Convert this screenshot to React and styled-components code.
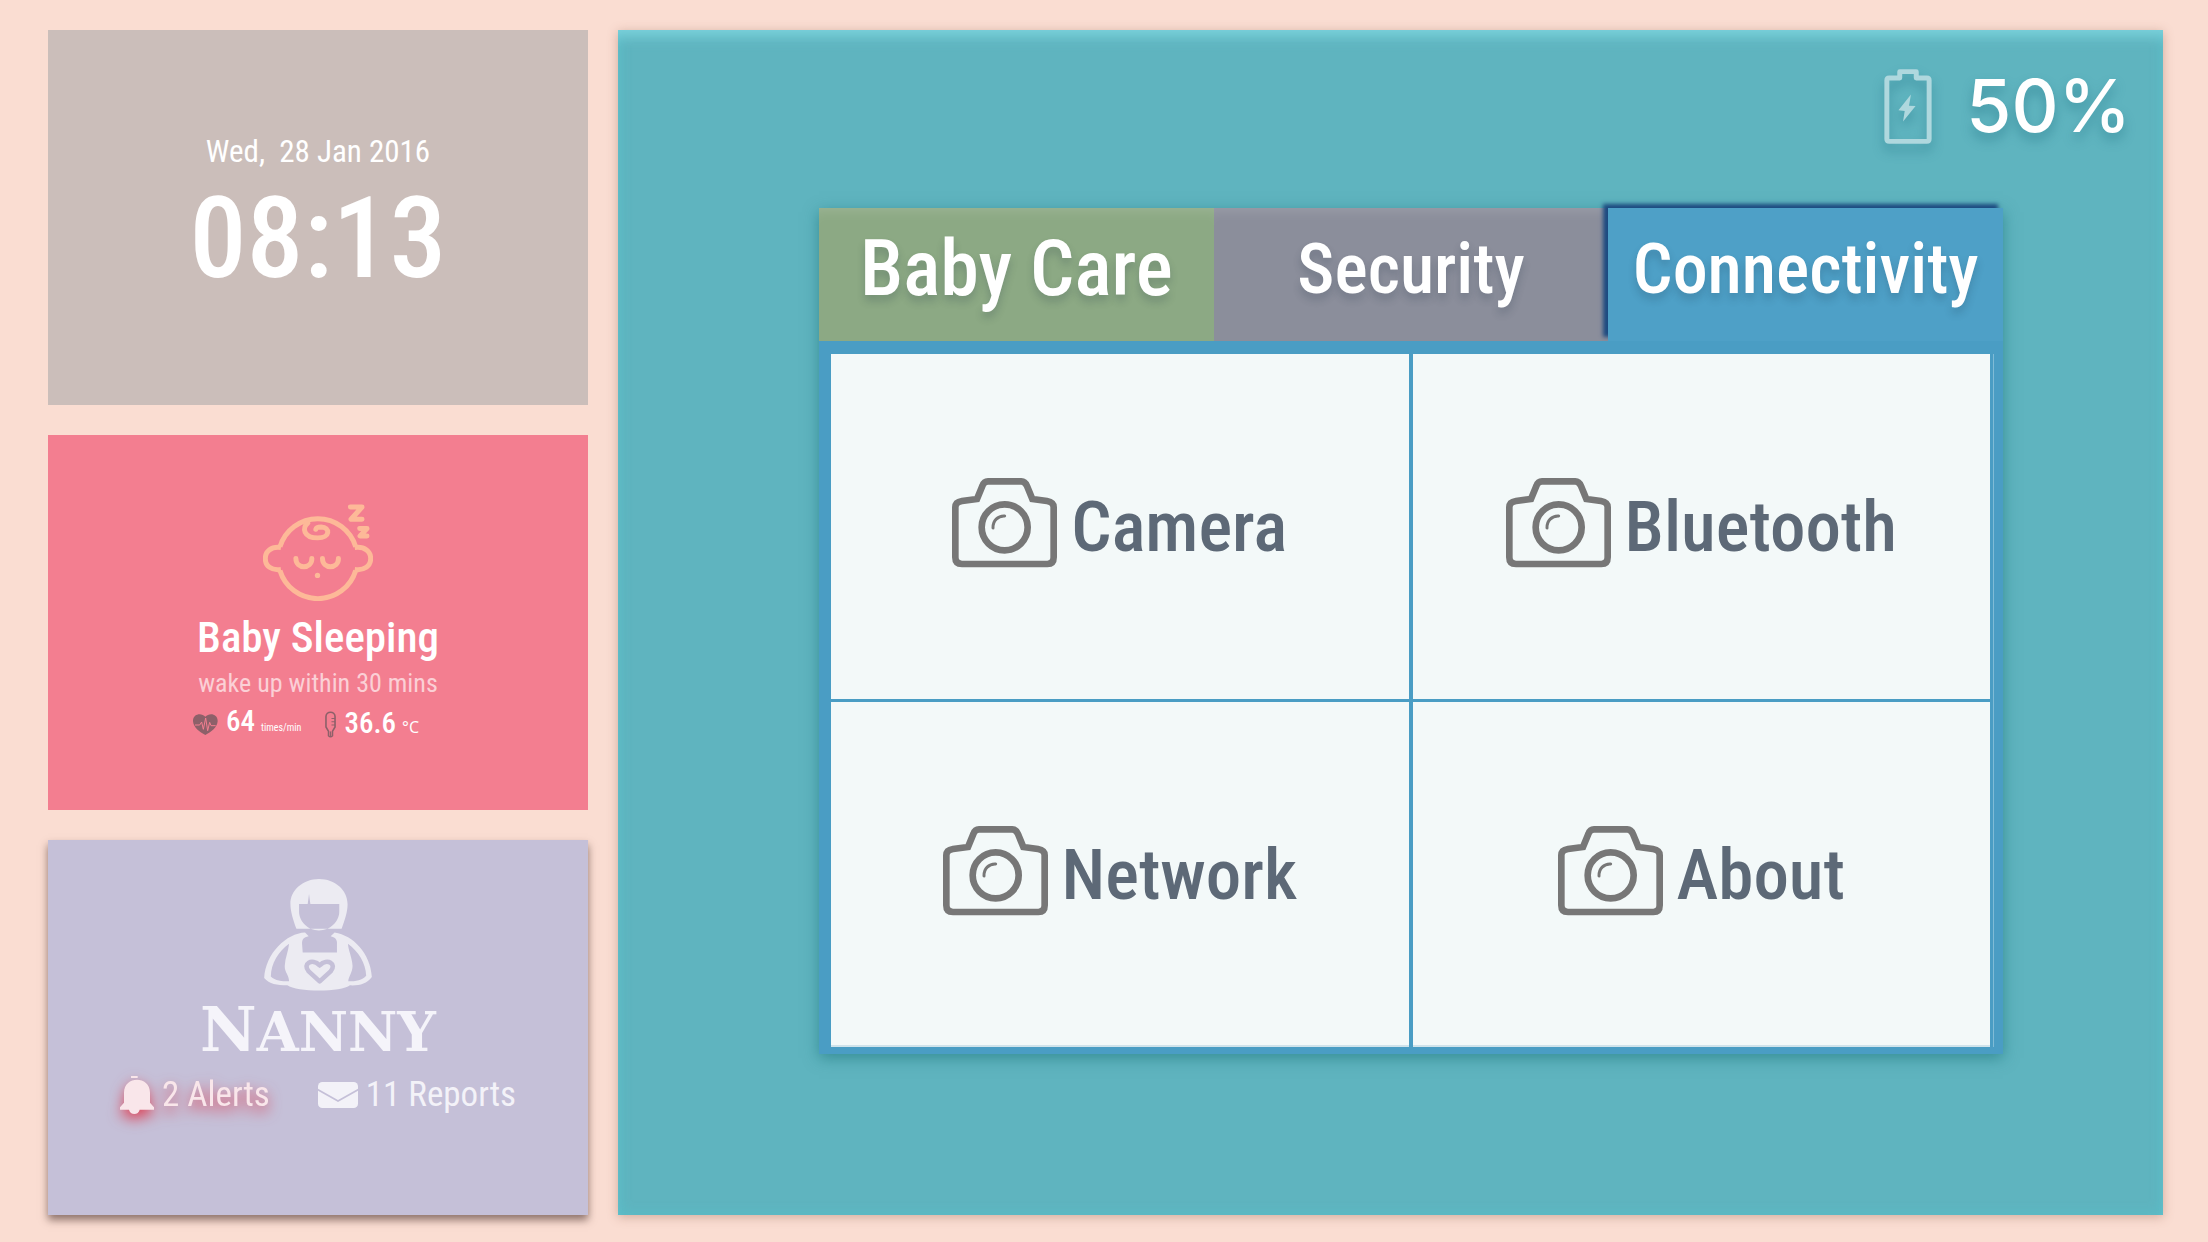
import React, { useState } from "react";
import styled, { createGlobalStyle } from "styled-components";

const CONDENSED = '"Roboto Condensed", "Liberation Sans", sans-serif';

const GlobalStyle = createGlobalStyle`
  *, *::before, *::after { box-sizing: border-box; }
  body {
    margin: 0;
    background: #faddd2;
    font-family: ${CONDENSED};
    font-weight: 500;
    color: #fff;
  }
  button {
    border: 0;
    margin: 0;
    padding: 0;
    font: inherit;
    color: inherit;
    cursor: pointer;
  }
  svg { display: block; flex: none; }
  h2, p { margin: 0; font-weight: inherit; }
`;

const Page = styled.div`
  display: grid;
  grid-template-columns: 540px minmax(0, 1fr);
  gap: 30px;
  min-height: 100vh;
  padding: 30px 45px 27px 48px;
`;

const Sidebar = styled.aside`
  display: grid;
  grid-auto-rows: minmax(0, 1fr);
  gap: 30px;
`;

const Card = styled.section`
  display: flex;
  flex-direction: column;
  align-items: center;
  padding-top: ${(p) => p.$top}px;
  background: ${(p) => p.$color};
  box-shadow: ${(p) => (p.$raised ? "0 5px 8px rgba(70, 45, 40, 0.6)" : "none")};
`;

const DateText = styled.p`
  font-size: 31px;
  font-weight: 400;
  line-height: 40px;
  white-space: pre;
`;

const TimeText = styled.time`
  font-size: 114px;
  line-height: 132px;
`;

const BabyTitle = styled.h2`
  margin-top: 8px;
  font-size: 43px;
  line-height: 56px;
`;

const BabyNote = styled.p`
  font-size: 26px;
  line-height: 36px;
  font-weight: 400;
  color: #fbd0d6;
`;

const Vitals = styled.div`
  display: flex;
  align-items: center;
  gap: 24px;
  padding-right: 24px;
`;

const Vital = styled.div`
  display: flex;
  align-items: center;
  gap: 8px;
`;

const Reading = styled.span`
  font-size: 29px;
  line-height: 40px;
`;

const Unit = styled.span`
  margin-left: 6px;
  font-family: ${(p) => (p.$plain ? '"Open Sans", sans-serif' : "inherit")};
  font-size: ${(p) => (p.$plain ? 16 : 10)}px;
  font-weight: 400;
`;

const NannyTitle = styled.h2`
  font-family: "DejaVu Serif", serif;
  font-weight: 700;
  font-size: 54px;
  line-height: 78px;
  color: #f5f4fa;
`;

const Initial = styled.span`
  font-size: 62px;
`;

const StatusRow = styled.nav`
  display: flex;
  gap: 48px;
`;

const StatusLink = styled.a`
  display: flex;
  align-items: center;
  gap: 8px;
  font-size: 35px;
  font-weight: 400;
  line-height: 48px;
  text-decoration: none;
  color: ${(p) => (p.$alert ? "#f9e6ea" : "#f3f2f8")};
  filter: ${(p) => (p.$alert ? "drop-shadow(0 6px 7px rgba(225, 40, 60, 0.8))" : "none")};
`;

const Main = styled.main`
  display: flex;
  flex-direction: column;
  padding: 38px 0 161px;
  background: #5fb4bf;
  box-shadow:
    inset 0 14px 14px -8px #7dd2dc,
    inset 0 0 14px rgba(80, 205, 215, 0.45),
    0 2px 10px rgba(130, 80, 60, 0.35);
`;

const Battery = styled.div`
  display: flex;
  justify-content: flex-end;
  align-items: center;
  gap: 34px;
  height: 76px;
  padding-right: 32px;
  filter: drop-shadow(0 7px 6px rgba(20, 100, 120, 0.4));
`;

const BatteryText = styled.span`
  font-family: Inter, sans-serif;
  font-weight: 500;
  font-size: 73px;
  line-height: 76px;
`;

const Settings = styled.div`
  flex: 1;
  display: flex;
  flex-direction: column;
  margin: 64px 160px 0 201px;
  box-shadow: 0 4px 14px rgba(20, 110, 115, 0.55);
`;

const Tabs = styled.div`
  display: flex;
`;

const Tab = styled.button`
  position: relative;
  flex: 1 1 0;
  height: 133px;
  padding-bottom: 12px;
  background: ${(p) => p.$color};
  font-size: ${(p) => p.$size}px;
  text-shadow: 0 6px 8px rgba(20, 40, 60, 0.2);
  box-shadow: ${(p) =>
    p["aria-selected"]
      ? "-5px -4px 4px #1d4a80"
      : "inset 0 12px 16px -12px rgba(255, 255, 255, 0.2)"};
  z-index: ${(p) => (p["aria-selected"] ? 1 : 0)};
`;

const Panel = styled.div`
  position: relative;
  z-index: 2;
  flex: 1;
  display: flex;
  padding: 13px 9px 7px 12px;
  background: #4a9dc4;
`;

const Tiles = styled.div`
  flex: 1;
  display: grid;
  grid-template-columns: 1fr 1fr;
  grid-template-rows: 1fr 1fr;
  column-gap: 4px;
  row-gap: 3px;
  padding-right: 3px;
  border-right: 1px solid #7fbbd6;
`;

const Tile = styled.button`
  display: flex;
  align-items: center;
  justify-content: center;
  gap: 14px;
  padding-bottom: 8px;
  background: #f3f9f9;
  color: #5d6977;
  font-size: 71px;
  line-height: 80px;

  &:nth-child(n + 3) {
    box-shadow: inset 0 -2px #cfe3eb;
  }
`;

const TileLabel = styled.span`
  padding-top: 8px;
`;

const CameraIcon = () => (
  <svg width="105" height="90" viewBox="0 0 315 270" fill="none" stroke="#777" strokeWidth="20" aria-hidden="true">
    <path d="M75 63 L91 24 Q96 10 108 10 H208 Q219 10 225 24 L241 63 L285 69 Q305 72 305 88 V238 Q305 258 286 258 H30 Q10 258 10 238 V88 Q10 72 30 69 Z" />
    <circle cx="158" cy="148" r="69" />
    <path d="M123 150 C122 128 138 113 158 114" strokeWidth="9" strokeLinecap="round" />
  </svg>
);

const BabyIcon = () => (
  <svg width="110" height="97" viewBox="33 42 331 290" fill="none" stroke="#fdb998" strokeWidth="15" aria-hidden="true">
    <path d="M84 170 A119 119 0 0 1 312 170 M84 241 A119 119 0 0 0 312 241" />
    <path d="M87 172 C56 168 40 185 40 205 C40 228 58 242 87 238 M309 172 C340 168 357 185 357 205 C357 228 338 242 309 238" />
    <path d="M168 98 C150 112 154 143 198 143 C236 143 236 111 208 110 C198 110 193 113 192 117" strokeLinecap="round" />
    <path d="M132 205 C132 238 180 238 180 205 M212 205 C212 238 260 238 260 205" strokeLinecap="round" />
    <path d="M296 50 H331 L298 87 H331 M324 115 H346 L325 137 H346" strokeLinecap="round" strokeLinejoin="round" />
    <circle cx="197" cy="256" r="8" fill="#fdb998" stroke="none" />
  </svg>
);

const NannyIcon = () => (
  <svg width="108" height="112" viewBox="42 27 324 337" fill="#ecebf2" fillRule="evenodd" aria-hidden="true">
    <path d="M139 177 H275 C285 150 293 125 293 103 C293 60 255 27 207 27 C160 27 120 60 121 103 C121 125 130 152 139 177 Z M147 102 V125 C147 156 175 182 207 182 C240 182 268 156 268 125 V102 H181 L177 72 L173 102 Z" />
    <path d="M165 188 L176 199 C160 203 156 208 156 222 L158 248 H261 V222 C262 208 256 203 242 199 L254 188 C310 197 362 250 366 322 C350 343 330 348 300 347 C275 368 140 368 112 347 C80 347 58 343 42 325 C46 250 110 190 165 188 Z M117 222 C85 245 63 280 62 320 C75 333 95 335 117 335 C117 315 103 308 104 288 C105 265 115 245 117 222 Z M294 222 C325 245 348 280 349 318 C338 332 318 335 295 335 C297 318 308 308 308 288 C306 262 296 245 294 222 Z" />
    <path d="M209 335 L176 305 C156 283 186 264 209 287 C232 264 262 283 242 305 Z" fill="none" stroke="#c5c0d8" strokeWidth="14" strokeLinejoin="round" />
  </svg>
);

const HeartIcon = () => (
  <svg width="25" height="21" viewBox="0 0 75 63" aria-hidden="true">
    <path d="M37 8 C48 -5 75 -2 74 22 C72 42 54 54 37 63 C20 54 2 42 0 22 C-1 -2 26 -5 37 8 Z" fill="#8d6069" />
    <path d="M6 33 H20 L26 24 L31 46 L38 12 L44 50 L50 25 L54 35 H68" fill="none" stroke="#f37e90" strokeWidth="3" />
  </svg>
);

const ThermometerIcon = () => (
  <svg width="11" height="27" viewBox="0 0 34 81" fill="none" stroke="#8d6069" strokeWidth="5" aria-hidden="true">
    <path d="M3 16 C3 -2 31 -2 31 16 V48 L23 62 V75 Q17 82 11 75 V62 L3 48 Z" />
    <path d="M20 22 H31 M20 32 H31 M20 42 H31 M17 62 V76" strokeWidth="3" />
  </svg>
);

const BellIcon = () => (
  <svg width="34" height="38" viewBox="0 0 102 114" fill="currentColor" aria-hidden="true">
    <path d="M33 0 H53 V6 H33 Z M12 80 V50 C12 -2 90 -2 90 50 V80 L102 94 V101 H59 C56 118 30 118 27 101 H0 V94 Z" />
  </svg>
);

const EnvelopeIcon = () => (
  <svg width="40" height="26" viewBox="0 0 120 78" aria-hidden="true">
    <rect width="120" height="78" rx="13" fill="currentColor" />
    <path d="M-2 22 L60 57 L122 22" fill="none" stroke="#c5c0d8" strokeWidth="5" />
  </svg>
);

const BatteryIcon = () => (
  <svg width="48" height="75" viewBox="0 -2 144 227" aria-hidden="true">
    <path
      d="M15 25 H47 V6 H97 V25 H129 Q136 25 136 32 V210 Q136 217 129 217 H15 Q8 217 8 210 V32 Q8 25 15 25 Z"
      fill="none" stroke="#afd8de" strokeWidth="15" strokeLinejoin="round"
    />
    <path d="M81 75 L43 123 L62 125 L57 157 L95 110 L75 109 Z" fill="#afd8de" />
  </svg>
);

const TABS = [
  { name: "Baby Care", color: "#8ca984", size: 78 },
  { name: "Security", color: "#8b8e9b", size: 70 },
  { name: "Connectivity", color: "#4ea0c7", size: 70 },
];

const TILES = ["Camera", "Bluetooth", "Network", "About"];

export default function App() {
  const [active, setActive] = useState("Connectivity");
  return (
    <>
      <GlobalStyle />
      <Page>
        <Sidebar>
          <Card $color="#cbbeba" $top={102}>
            <DateText>{"Wed,  28 Jan 2016"}</DateText>
            <TimeText>08:13</TimeText>
          </Card>
          <Card $color="#f37e90" $top={69}>
            <BabyIcon />
            <BabyTitle>Baby Sleeping</BabyTitle>
            <BabyNote>wake up within 30 mins</BabyNote>
            <Vitals>
              <Vital>
                <HeartIcon />
                <Reading>64<Unit>times/min</Unit></Reading>
              </Vital>
              <Vital>
                <ThermometerIcon />
                <Reading>36.6<Unit $plain>°C</Unit></Reading>
              </Vital>
            </Vitals>
          </Card>
          <Card $color="#c5c0d8" $top={39} $raised>
            <NannyIcon />
            <NannyTitle><Initial>N</Initial>ANNY</NannyTitle>
            <StatusRow>
              <StatusLink href="#alerts" $alert><BellIcon />2 Alerts</StatusLink>
              <StatusLink href="#reports"><EnvelopeIcon />11 Reports</StatusLink>
            </StatusRow>
          </Card>
        </Sidebar>
        <Main>
          <Battery>
            <BatteryIcon />
            <BatteryText>50%</BatteryText>
          </Battery>
          <Settings>
            <Tabs role="tablist">
              {TABS.map((t) => (
                <Tab
                  key={t.name}
                  role="tab"
                  aria-selected={t.name === active}
                  $color={t.color}
                  $size={t.size}
                  onClick={() => setActive(t.name)}
                >
                  {t.name}
                </Tab>
              ))}
            </Tabs>
            <Panel role="tabpanel">
              <Tiles>
                {TILES.map((name) => (
                  <Tile key={name}>
                    <CameraIcon />
                    <TileLabel>{name}</TileLabel>
                  </Tile>
                ))}
              </Tiles>
            </Panel>
          </Settings>
        </Main>
      </Page>
    </>
  );
}
